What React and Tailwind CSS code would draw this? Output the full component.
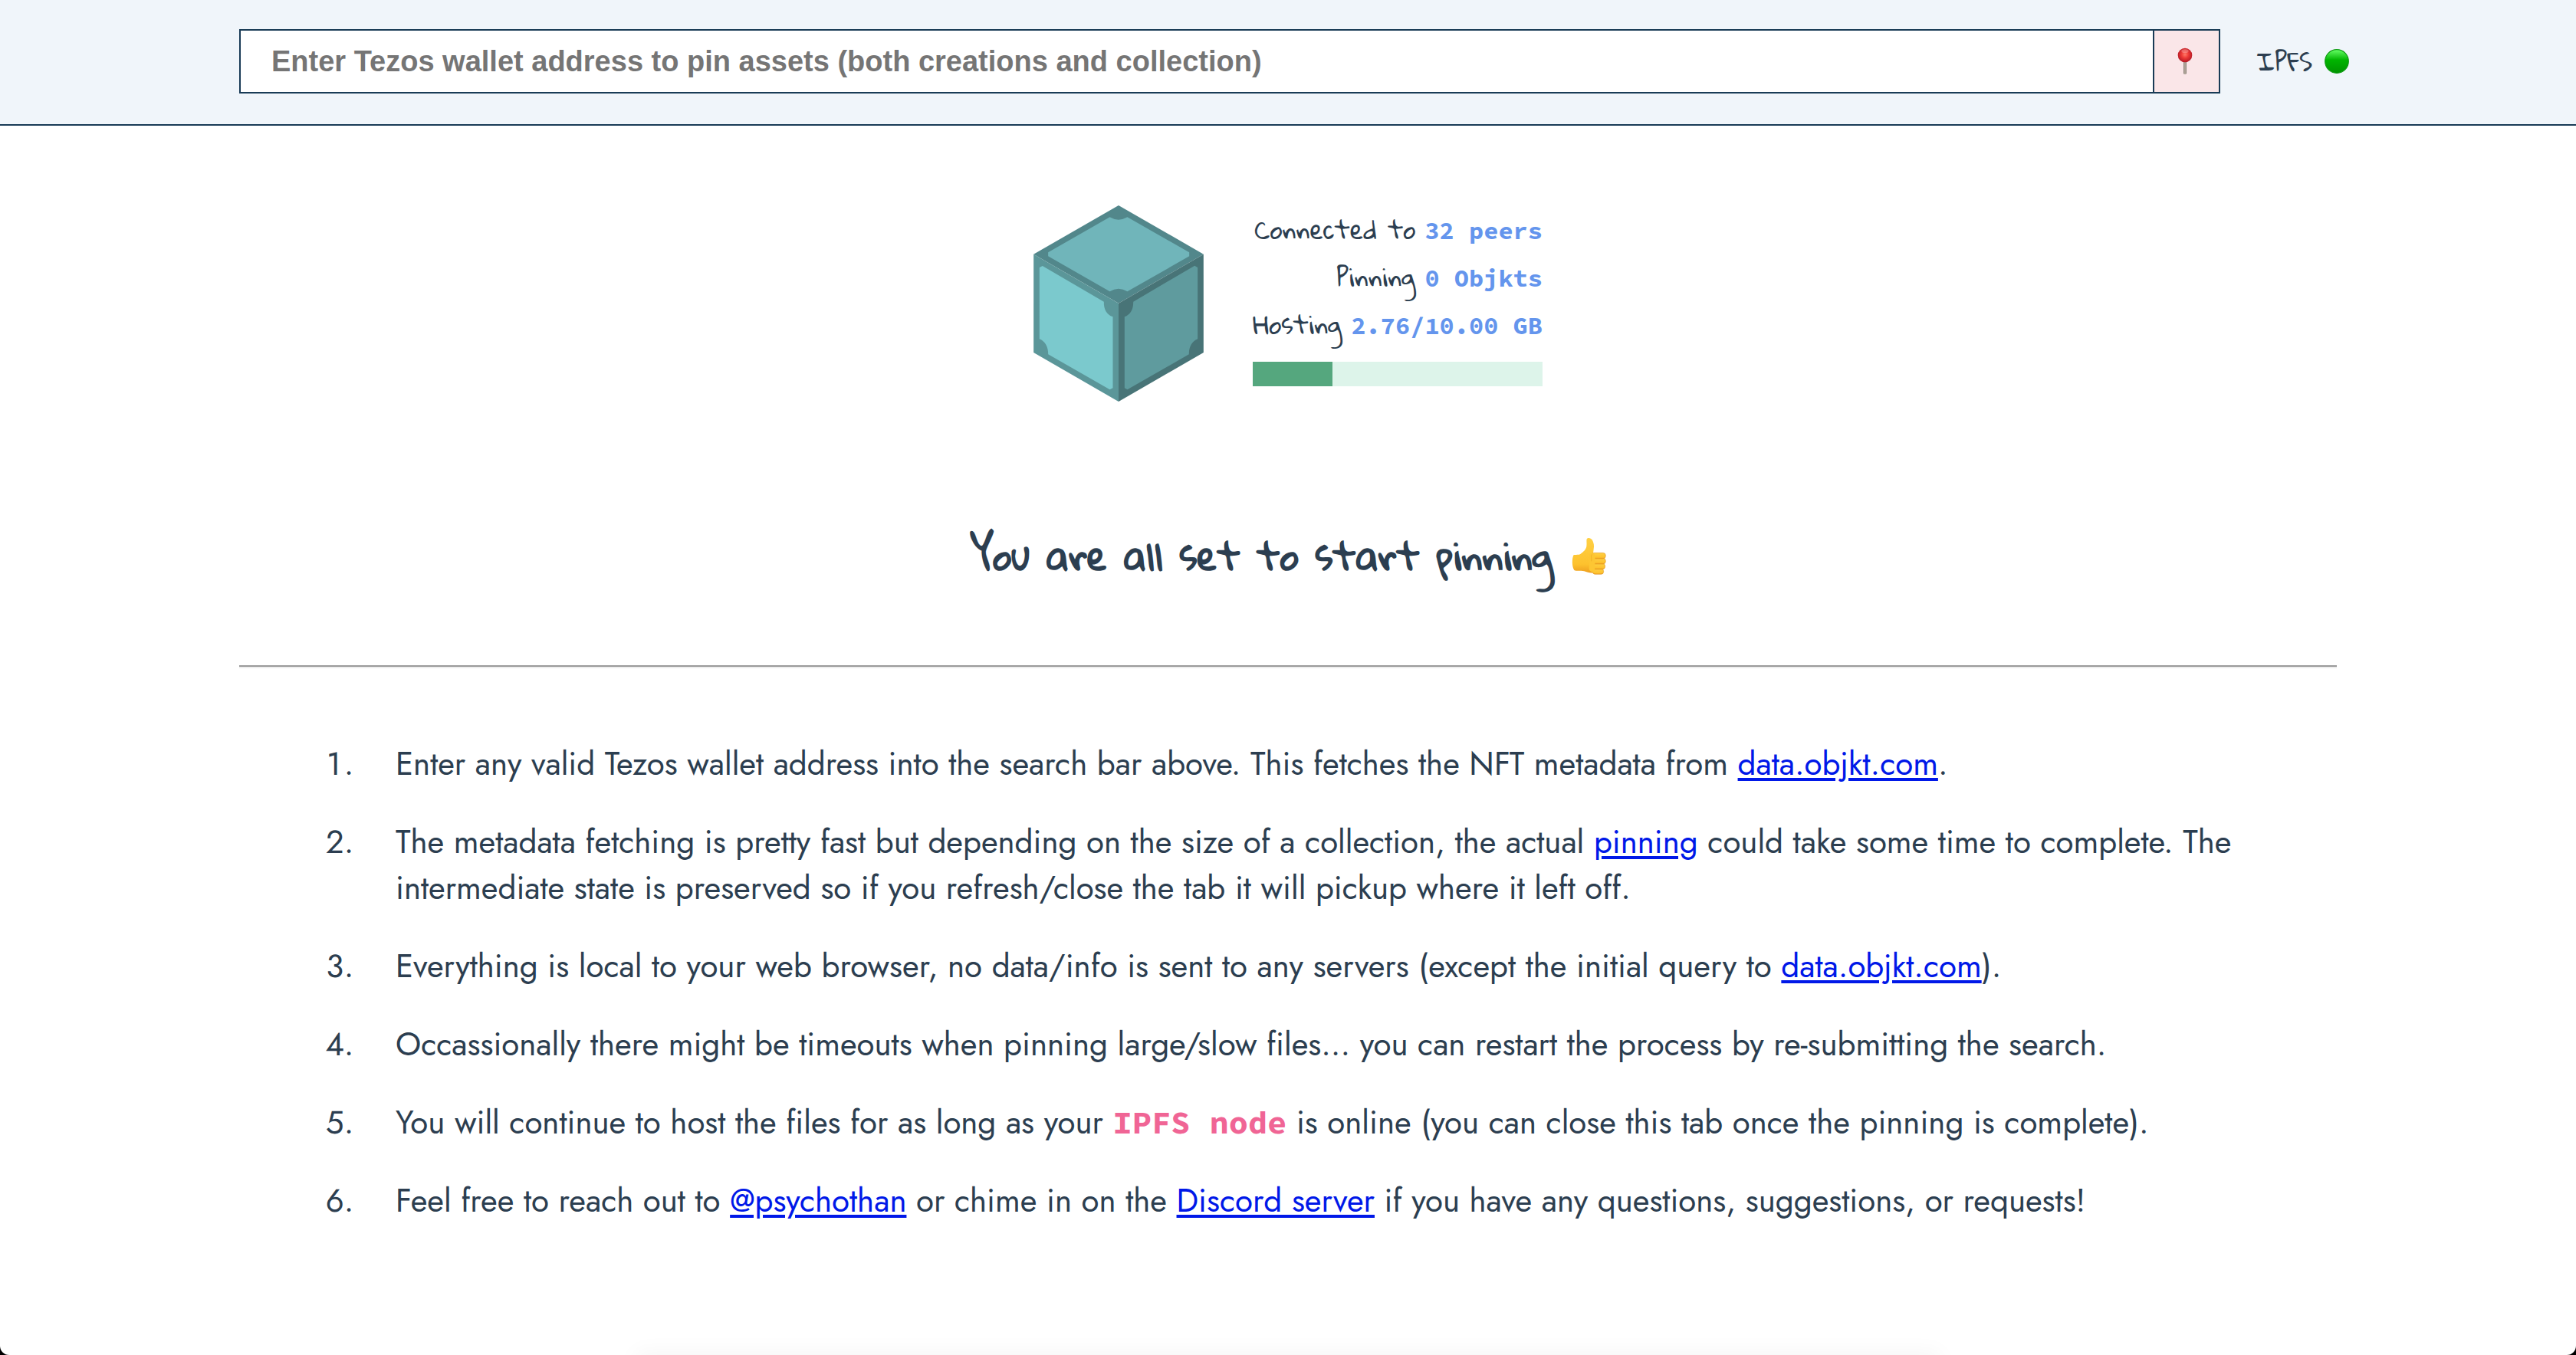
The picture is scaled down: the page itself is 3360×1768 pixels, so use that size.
function Cube() {
  return (
    <svg viewBox="84 54 665 768" className="h-64 w-[222px] shrink-0" role="img" aria-label="IPFS cube">
      <path d="M84 245 416.500 54 749 245 416.500 437z" fill="#52878b" />
      <path d="M84 245 416.500 437V822L84 630z" fill="#5b9699" />
      <path d="M749 245 416.500 437V822L749 630z" fill="#487477" />
      <path d="M141 238 382 100Q416 120 451 100L693 238V253L451 391Q416 370 382 391L141 253z" fill="#70b5ba" />
      <path d="M107 297 119 291 359 431C358 460 370 482 394 490V769L382 775 141 637C142 610 130 586 107 577z" fill="#7bc9cd" />
      <path d="M726 297 714 290 474 431C475 460 463 482 440 490V769L451 775 692 637C691 610 703 586 726 577z" fill="#5f9b9e" />
    </svg>
  );
}

function Pin() {
  return (
    <svg viewBox="0 0 60 108" className="h-9 w-5" aria-hidden="true">
      <defs>
        <radialGradient id="pinHead" cx=".5" cy=".45" r=".55">
          <stop offset="0" stopColor="#ff7a68" />
          <stop offset=".45" stopColor="#ee3a36" />
          <stop offset="1" stopColor="#b01825" />
        </radialGradient>
        <linearGradient id="pinNeedle" x1="0" x2="1">
          <stop offset="0" stopColor="#81786f" />
          <stop offset=".5" stopColor="#bcb2a5" />
          <stop offset="1" stopColor="#81786f" />
        </linearGradient>
      </defs>
      <path d="M24 50h12v52q-6 6-12 0z" fill="url(#pinNeedle)" />
      <circle cx="30" cy="30" r="28" fill="url(#pinHead)" />
      <ellipse cx="30" cy="14" rx="14" ry="7" fill="#fff" opacity=".25" />
    </svg>
  );
}

function StatusDot() {
  return (
    <svg viewBox="0 0 32 32" className="size-8" role="img" aria-label="online">
      <defs>
        <linearGradient id="dot" x1="0" y1="0" x2="0" y2="1">
          <stop offset="0" stopColor="#6f6" />
          <stop offset=".45" stopColor="#00b400" />
          <stop offset="1" stopColor="#009400" />
        </linearGradient>
      </defs>
      <circle cx="16" cy="16" r="15.300" fill="url(#dot)" stroke="#0c9a10" strokeWidth="1.200" />
    </svg>
  );
}

function Thumb() {
  return (
    <svg viewBox="56 34 135 147" className="h-[49px] w-[45px]" aria-hidden="true">
      <defs>
        <linearGradient id="skin" x1="0" y1="0" x2="0" y2="1">
          <stop offset="0" stopColor="#ffd044" />
          <stop offset=".75" stopColor="#fdc22e" />
          <stop offset="1" stopColor="#ee9f20" />
        </linearGradient>
      </defs>
      <path
        d="M64 103C72 102 84 104 90 100C102 91 112 82 114 70C116 58 113 48 115 41C119 34 131 36 136 44C142 55 145 66 142 80L140 98L146 172C132 176 118 172 105 167C92 162 78 169 66 163C57 150 56 118 64 103z"
        fill="url(#skin)"
      />
      <g fill="url(#skin)" stroke="#d98b1a" strokeWidth="1.500">
        <rect x="138" y="157" width="43" height="22" rx="11" />
        <rect x="136" y="137" width="51" height="22" rx="11" />
        <rect x="135" y="116" width="54" height="23" rx="11" />
        <rect x="133" y="95" width="56" height="23" rx="11" />
      </g>
      <path d="M126 100C134 92 142 96 148 104L146 170C136 172 128 168 124 160z" fill="#fdc633" />
      <path d="M135 101C129 110 136 118 133 128" fill="none" stroke="#e9a424" strokeWidth="2" />
    </svg>
  );
}

function Stat({ label, value }) {
  return (
    <p className="flex h-[62px] items-baseline justify-end gap-3 leading-[62px] whitespace-nowrap">
      <span className="font-['Gloria_Hallelujah','Lato',cursive] text-[32px]">{label}</span>
      <span className="font-['Source_Code_Pro','Liberation_Mono',monospace] text-[32px] font-bold text-[#6495ed]">
        {value}
      </span>
    </p>
  );
}

function Link({ children }) {
  return (
    <a href="#" className="text-[#0018e8] underline decoration-4 underline-offset-[4px]">
      {children}
    </a>
  );
}

export default function App() {
  return (
    <div className="min-h-screen bg-black">
      <div className="flex min-h-screen flex-col overflow-hidden rounded-b-[12px] bg-white font-['Jost','Lato',sans-serif] text-[#2c3e50]">
        <header className="flex items-center gap-12 border-b-2 border-[#193b56] bg-[#f0f5fa] pt-[38px] pr-[296px] pb-10 pl-[312px]">
          <form className="flex h-[84px] flex-1 border-2 border-[#193b56]" onSubmit={(e) => e.preventDefault()}>
            <input
              type="text"
              aria-label="Tezos wallet address"
              placeholder="Enter Tezos wallet address to pin assets (both creations and collection)"
              className="min-w-0 flex-1 bg-white px-10 font-['Liberation_Sans',Arial,sans-serif] text-[38px] font-bold outline-none placeholder:text-[#757575]"
            />
            <button type="submit" aria-label="Pin" className="flex w-[86px] items-center justify-center border-l-2 border-[#193b56] bg-[#fae6e8] pr-1">
              <Pin />
            </button>
          </form>
          <p className="flex items-center gap-4 font-['Gloria_Hallelujah','Lato',cursive] text-[32px] leading-[60px]">
            IPFS <StatusDot />
          </p>
        </header>

        <main className="flex flex-col px-[312px]">
          <section className="mt-[104px] flex justify-center gap-16">
            <Cube />
            <div className="w-[378px]">
              <Stat label="Connected to" value="32 peers" />
              <Stat label="Pinning" value="0 Objkts" />
              <Stat label="Hosting" value="2.76/10.00 GB" />
              <div role="progressbar" aria-label="Storage used" aria-valuenow={27.6} className="mt-[18px] h-8 bg-[#ddf4ea]">
                <div className="h-full bg-[#55a77e]" style={{ width: "27.6%" }} />
              </div>
            </div>
          </section>

          <h1 className="mt-[161px] flex items-center justify-center gap-6 font-['Gloria_Hallelujah','Lato',cursive] text-[48px] leading-[80px] font-bold">
            You are all set to start pinning <Thumb />
          </h1>

          <hr className="mt-[103px] border-t-2 border-b-2 border-t-[#9a9a9a] border-b-[#eeeeee]" />

          <ol className="mt-[95px] ml-[162px] flex list-decimal flex-col gap-[42px] text-[42px] leading-[60px]">
            <li className="pl-[42px]">
              Enter any valid Tezos wallet address into the search bar above. This fetches the NFT metadata from{" "}
              <Link>data.objkt.com</Link>.
            </li>
            <li className="pl-[42px]">
              The metadata fetching is pretty fast but depending on the size of a collection, the actual{" "}
              <Link>pinning</Link> could take some time to complete. The
              <br />
              intermediate state is preserved so if you refresh/close the tab it will pickup where it left off.
            </li>
            <li className="pl-[42px]">
              Everything is local to your web browser, no data/info is sent to any servers (except the initial query to{" "}
              <Link>data.objkt.com</Link>).
            </li>
            <li className="pl-[42px]">
              Occassionally there might be timeouts when pinning large/slow files... you can restart the process by
              re-submitting the search.
            </li>
            <li className="pl-[42px]">
              You will continue to host the files for as long as your{" "}
              <strong className="font-['Source_Code_Pro','Liberation_Mono',monospace] leading-none font-bold text-[#f06595]">
                IPFS node
              </strong>{" "}
              is online (you can close this tab once the pinning is complete).
            </li>
            <li className="pl-[42px]">
              Feel free to reach out to <Link>@psychothan</Link> or chime in on the <Link>Discord server</Link> if you
              have any questions, suggestions, or requests!
            </li>
          </ol>
        </main>
        <div className="mx-auto mt-auto h-0 w-1/2 shadow-[0_10px_30px_10px_rgba(0,0,0,0.06)]" />
      </div>
    </div>
  );
}
